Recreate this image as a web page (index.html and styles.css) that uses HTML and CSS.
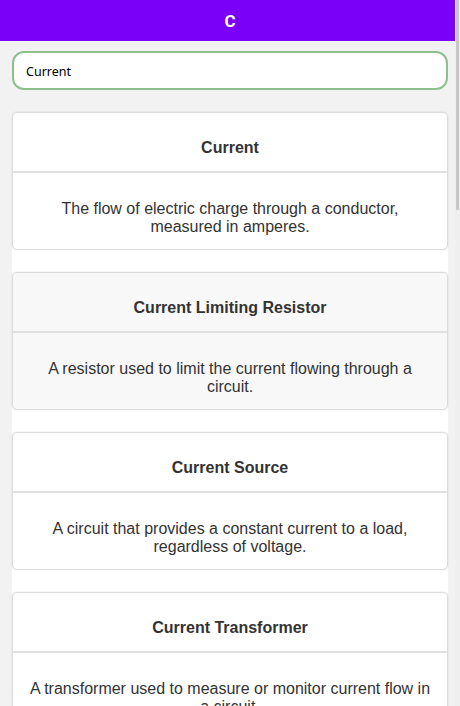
FILE: index.html
```html
<!DOCTYPE html>
<html lang="en">
<head>
<meta charset="utf-8">
<title>Glossary - C</title>
<link rel="stylesheet" href="styles.css">
</head>
<body>
<header class="topbar"><h1 class="topbar-title">C</h1></header>
<div class="search-wrap">
  <input class="search" type="text" value="Current">
</div>
<main class="list">
  <section class="card">
    <div class="card-head"><h2 class="card-title">Current</h2></div>
    <div class="card-body"><p>The flow of electric charge through a conductor, measured in amperes.</p></div>
  </section>
  <section class="card card--hover">
    <div class="card-head"><h2 class="card-title">Current Limiting Resistor</h2></div>
    <div class="card-body"><p>A resistor used to limit the current flowing through a circuit.</p></div>
  </section>
  <section class="card">
    <div class="card-head"><h2 class="card-title">Current Source</h2></div>
    <div class="card-body"><p>A circuit that provides a constant current to a load, regardless of voltage.</p></div>
  </section>
  <section class="card">
    <div class="card-head"><h2 class="card-title">Current Transformer</h2></div>
    <div class="card-body"><p>A transformer used to measure or monitor current flow in a circuit.</p></div>
  </section>
  <section class="card">
    <div class="card-head"><h2 class="card-title">Current Density</h2></div>
    <div class="card-body"><p>The amount of current flowing per unit cross-sectional area of a conductor.</p></div>
  </section>
  <section class="card">
    <div class="card-head"><h2 class="card-title">Current Divider</h2></div>
    <div class="card-body"><p>A circuit that splits an input current among parallel branches.</p></div>
  </section>
</main>
<div class="scrollbar" aria-hidden="true"><div class="scrollbar-thumb"></div></div>
</body>
</html>
```
FILE: styles.css
```css
html, body {
  margin: 0;
  padding: 0;
  height: 100%;
  overflow: hidden;
}
body {
  background: #f2f2f2;
  font-family: "Liberation Sans", Arial, sans-serif;
  color: #333;
}
.topbar {
  height: 41px;
  background: #7a00f8;
  display: flex;
  align-items: center;
  justify-content: center;
}
.topbar-title {
  margin: 0;
  font-family: Roboto, "Liberation Sans", sans-serif;
  font-size: 17px;
  font-weight: 700;
  color: #fff;
}
.search-wrap {
  padding: 10px 12px 22px;
}
.search {
  display: block;
  box-sizing: border-box;
  width: 100%;
  height: 39px;
  border: 2px solid #8cc08c;
  border-radius: 12px;
  background: #fff;
  padding: 1px 12px 0;
  font-family: "Noto Sans", "Open Sans", sans-serif;
  font-size: 12.5px;
  color: #000;
  outline: none;
}
.list {
  margin: 0 12px;
  background: #fff;
  border-radius: 6px;
  display: flex;
  flex-direction: column;
  gap: 22px;
}
.card {
  background: #fff;
  border: 1px solid #dcdcdc;
  border-radius: 5px;
  box-shadow: 0 0 2px rgba(0, 0, 0, 0.12);
  text-align: center;
}
.card--hover {
  background: #f8f8f8;
}
.card-head {
  padding: 26px 15px 14px;
  border-bottom: 2px solid #e0e0e0;
}
.card-title {
  margin: 0;
  font-size: 16px;
  font-weight: 700;
  color: #333;
}
.card-body {
  padding: 26.5px 15px 13.5px;
}
.card-body p {
  margin: 0;
  font-size: 16px;
  color: #333;
}
.scrollbar {
  position: fixed;
  top: 0;
  right: 0;
  width: 5px;
  height: 100%;
  background: #efefef;
}
.scrollbar-thumb {
  margin-left: 1px;
  width: 3px;
  height: 210px;
  background: #c8c8c8;
}
```
